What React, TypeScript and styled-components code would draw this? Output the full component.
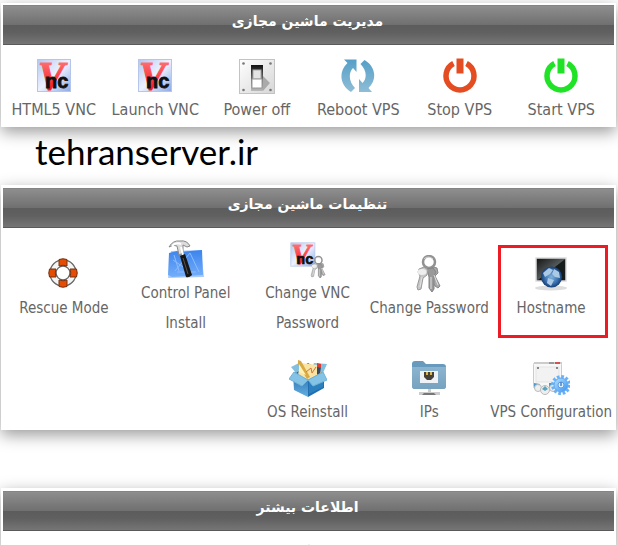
import React from "react";
import styled, { createGlobalStyle } from "styled-components";

const GlobalStyle = createGlobalStyle`
  * { box-sizing: border-box; }
  body { margin: 0; background: #fff; }
`;

const Page = styled.main`
  display: flex;
  flex-direction: column;
  height: 100vh;
  overflow: hidden;
  padding: 3px 2px 0 1px;
  font-family: "DejaVu Sans Condensed", "Noto Sans", sans-serif;
`;

const Panel = styled.section<{ $spaced?: boolean; $fill?: boolean }>`
  flex: ${(p) => (p.$fill ? "1 0 auto" : "0 0 auto")};
  padding: ${(p) => (p.$spaced ? "3px 2px" : "2px")};
  background: #fff;
  box-shadow: 0 5px 15px rgba(0, 0, 0, 0.4);
`;

const PanelTitle = styled.h2`
  display: flex;
  justify-content: center;
  margin: 0;
  height: 40px;
  padding: 5px 2px 0 0;
  border-top: 1px solid #848484;
  border-bottom: 1px solid #5a5a5a;
  background: linear-gradient(#8e8e8e, #707070 49%, #5c5c5c 50%, #606060 70%, #757575);
  color: #fff;
  font: bold 14px/20px "DejaVu Sans", sans-serif;
`;

const Actions = styled.nav<{ $columns: number; $size: number }>`
  display: grid;
  grid-template-columns: repeat(${(p) => p.$columns}, minmax(0, 1fr));
  row-gap: 21px;
  padding: 12px 2px 0 0;
  font-size: ${(p) => p.$size}px;
`;

const Action = styled.a<{ $marked?: boolean }>`
  display: flex;
  flex-direction: column;
  align-items: center;
  justify-content: center;
  color: #666;
  text-decoration: none;
  ${(p) => p.$marked && "margin: 5px 4px 0 8px; padding: 0 4px 5px 0; border: 3px solid #ed1c24;"}
`;

const Label = styled.span`
  direction: ltr;
  margin: 0 -2px;
  text-align: center;
  line-height: 30px;
`;

const Glyph = styled.svg`
  display: block;
  flex: none;
  width: 38px;
  height: 38px;
  direction: ltr;
`;

const Watermark = styled.p`
  flex: none;
  margin: 0;
  padding-left: 34px;
  height: 58px;
  color: #000;
  font: 35px/48px Lato, sans-serif;
`;

const Gap = styled.div`
  flex: none;
  height: 58px;
`;

const More = styled.div`
  display: flex;
  justify-content: center;
  padding-top: 12px;
`;

function Icon({ children }: { children: React.ReactNode }) {
  return <Glyph viewBox="0 0 38 38" aria-hidden="true">{children}</Glyph>;
}

function VncArt({ id }: { id: string }) {
  return (
    <>
      <defs>
        <linearGradient id={`${id}b`} x1="0" y1="0" x2="1" y2="1">
          <stop offset="0" stopColor="#b3c7f2" /><stop offset=".5" stopColor="#edf2ff" /><stop offset="1" stopColor="#8da9e4" />
        </linearGradient>
        <linearGradient id={`${id}r`} x1="0" y1="0" x2="0" y2="1">
          <stop offset="0" stopColor="#ff8b8b" /><stop offset=".55" stopColor="#fb3c43" /><stop offset="1" stopColor="#f00008" />
        </linearGradient>
      </defs>
      <rect x="2.5" y="2.5" width="33" height="32" fill={`url(#${id}b)`} stroke="#b6c6ea" />
      <text x="3" y="32" fill={`url(#${id}r)`} stroke={`url(#${id}r)`} strokeWidth="1.2" fontFamily="Liberation Serif" fontStyle="italic" fontWeight="700" fontSize="40">V</text>
      <text x="10" y="31" fill="#111" stroke="#111" strokeWidth=".8" fontFamily="Liberation Sans" fontWeight="700" fontSize="20">nc</text>
    </>
  );
}

function SwitchIcon() {
  return (
    <Icon>
      <defs>
        <linearGradient id="plate" x1="0" y1="0" x2="1" y2="1"><stop stopColor="#fff" /><stop offset="1" stopColor="#d6d6d6" /></linearGradient>
        <linearGradient id="slot" x1="0" y1="0" x2="0" y2="1"><stop stopColor="#111" /><stop offset="1" stopColor="#bbb" /></linearGradient>
      </defs>
      <rect x="1.5" y="2.5" width="35" height="34" fill="url(#plate)" stroke="#c3c3c3" />
      <path d="M24 18l8 8-7 8H15z" fill="#aaa" />
      <rect x="13" y="8" width="12" height="26" fill="url(#slot)" />
      <rect x="15" y="13" width="8" height="9" fill="#e4e4e4" stroke="#aaa" />
      <path d="M14 22h10v9H14z" fill="#fff" stroke="#999" />
      <g fill="#777"><circle cx="5.500" cy="6.500" r="1.300" /><circle cx="32.500" cy="6.500" r="1.300" /><circle cx="5.500" cy="33" r="1.300" /><circle cx="32.500" cy="33" r="1.300" /></g>
    </Icon>
  );
}

function RebootIcon() {
  return (
    <Icon>
      <defs><linearGradient id="reboot" x1="0" y1="0" x2="0" y2="1"><stop stopColor="#559fc8" /><stop offset="1" stopColor="#8fbdd6" /></linearGradient></defs>
      <path d="M5 2.500H17.500V15l-3.500-4c-5 5-4 14 2 20l-4 4C1 28-1 15 8.500 6z" fill="url(#reboot)" />
      <path d="M33 35H20V22l3.500 4c5-5 4-13-2-19l4-4C36 9 39 22 29.500 31z" fill="url(#reboot)" />
    </Icon>
  );
}

function PowerIcon({ color }: { color: string }) {
  return (
    <Icon>
      <path d="M12.500 6.500A14 14 0 1 0 25.500 6.500" fill="none" stroke={color} strokeWidth="5.500" />
      <path d="M15.500 1.500h7v15h-7z" fill={color} />
    </Icon>
  );
}

function RescueIcon() {
  return (
    <Icon>
      <circle cx="18" cy="18" r="10" fill="none" stroke="#666" strokeWidth="7.500" />
      <circle cx="18" cy="18" r="10" fill="none" stroke="#f5f5f5" strokeWidth="5" />
      {[0, 90, 180, 270].map((angle) => (
        <g key={angle} transform={`rotate(${angle} 18 18)`}>
          <path d="M14 4.500q4-1.500 8 0v6.500q-4-1.500-8 0z" fill="#e64d04" stroke="#743212" />
        </g>
      ))}
    </Icon>
  );
}

function ToolsIcon() {
  return (
    <Icon>
      <defs><linearGradient id="blueprint" x1="0" y1="0" x2="0" y2="1"><stop stopColor="#3b84ed" /><stop offset="1" stopColor="#75aefa" /></linearGradient></defs>
      <path d="M4 11l30-1 3 27L1 38z" fill="#a8ccff" />
      <path d="M2 13l8-2 2 1 23-2 1 25-31 2-4-2z" fill="url(#blueprint)" />
      <path d="M8 31L23 13l9 19M6 20l19 13M10 32h19M7 15l5 16" fill="none" stroke="#8bbcff" />
      <path d="M2 7Q6 0 13 1q7-1 10 5l-3 1-4-2v8l-4 2-2-9q-4-2-8 1z" fill="#ddd" stroke="#888" />
      <path d="M5 6q4-4 9-2M14 7l2 8" fill="none" stroke="#fff" strokeWidth="2" />
      <path d="M13 16l5-2 7 21q-3 3-6 2z" fill="#171717" /><path d="M16 18l5 16" stroke="#555" />
    </Icon>
  );
}

function KeysArt() {
  return (
    <>
      <circle cx="19" cy="7" r="6" fill="none" stroke="#929292" strokeWidth="2.500" />
      <path d="M14 4q4-4 9 0" fill="none" stroke="#d3d3d3" />
      <path d="M23 12l4 1 1 5-3 3 5 10-2 2-3-2-6-11 1-5z" fill="#aaa" stroke="#888" />
      <path d="M17 14l6-1 3 4-2 4v13l-2 3-3-4V22z" fill="#999" stroke="#858585" />
      <path d="M9 14l5-2 4 3-1 5-4 3-2 11-3 1-1-3 3-11-2-4z" fill="#c7c7c7" stroke="#999" />
      <ellipse cx="12" cy="17" rx="4.500" ry="3" fill="#eee" /><path d="M21 22v12M24 20l4 10M12 22l-2 10" stroke="#e1e1e1" />
    </>
  );
}

function HostIcon() {
  return (
    <Icon>
      <defs>
        <linearGradient id="screen" x1="0" y1="0" x2="1" y2="1"><stop stopColor="#111" /><stop offset=".5" stopColor="#53595a" /><stop offset=".52" stopColor="#161b1c" /></linearGradient>
        <radialGradient id="globe"><stop stopColor="#83b3dc" /><stop offset=".6" stopColor="#3f75b4" /><stop offset="1" stopColor="#173e75" /></radialGradient>
      </defs>
      <ellipse cx="19" cy="33" rx="16" ry="2.500" fill="#ddd" />
      <rect x="4" y="3" width="30" height="23" fill="url(#screen)" stroke="#ddd" strokeWidth="1.500" />
      <circle cx="19.500" cy="22" r="10.500" fill="url(#globe)" />
      <path d="M11 18l6-5 4 2-3 4-5 3zM22 14l5 3 1 6-5-1-3-3zM16 23l6 2-3 6-4-3z" fill="#a9c9e5" />
    </Icon>
  );
}

function BoxIcon() {
  return (
    <Icon>
      <defs><linearGradient id="boxSide" x1="0" y1="0" x2="0" y2="1"><stop stopColor="#286eaa" /><stop offset="1" stopColor="#63b0e3" /></linearGradient></defs>
      <path d="M5 14l14-10 15 9-14 9z" fill="#276397" />
      <path d="M2 8l8-4 9 2-12 8zM25 4l13 1-4 9-11-5z" fill="#83bfdf" />
      <path d="M11 4l18 2 3 8-13 7-10-5z" fill="#fae4a3" /><path d="M9 1l3 1 9 16-3 2L9 5z" fill="#d8aa43" />
      <path d="M10 5l7 11-7-3z" fill="#fff1b6" /><path d="M17 13l5-4 1 5 4-6" fill="none" stroke="#d8733f" /><path d="M28 6l4 2-1 7-3 1z" fill="#384a66" /><path d="M28 4l4 1v4l-4-1z" fill="#dc3c34" />
      <path d="M4 15l15 6v17L5 31z" fill="url(#boxSide)" /><path d="M19 21l16-7v15l-16 9z" fill="#216eb1" /><path d="M20 24l14-6v10l-14 7z" fill="#2c80bd" />
      <path d="M5 13l14 8-6 6-13-7zM19 21l15-8 4 8-14 6z" fill="#84c3e6" stroke="#73b1d5" />
    </Icon>
  );
}

function FolderIcon() {
  return (
    <Icon>
      <defs><linearGradient id="folder" x1="0" y1="0" x2="0" y2="1"><stop stopColor="#8bb4cf" /><stop offset="1" stopColor="#76a2bf" /></linearGradient></defs>
      <path d="M2 5q0-3 3-3h8l3 3h17q3 0 3 3v19q0 3-3 3H5q-3 0-3-3z" fill="#679abd" />
      <path d="M2 8h34v19q0 3-3 3H5q-3 0-3-3z" fill="url(#folder)" />
      <rect x="10" y="12" width="18" height="12" fill="#edf2f6" /><path d="M14 13h10v5l-3 3h-4l-3-3z" fill="#45413a" /><path d="M16 13v3h2v-3m2 0v3h2v-3" fill="#d5b553" />
      <path d="M18 30h3v4h-3zM9 33h21v3H9z" fill="#ccc" /><path d="M14 34h10l2 2H12z" fill="#777" />
    </Icon>
  );
}

function ConfigIcon() {
  return (
    <Icon>
      <defs><linearGradient id="gear" x1="0" y1="0" x2="1" y2="1"><stop stopColor="#b9e4ff" /><stop offset="1" stopColor="#3590f2" /></linearGradient></defs>
      <rect x="1.500" y="3.500" width="28" height="26" rx="2" fill="#f8f8f8" stroke="#ccc" /><path d="M2 4h28" stroke="#ccc" strokeWidth="2" /><path d="M17 4h5" stroke="#999" strokeWidth="2" /><path d="M23 4h5" stroke="#d55050" strokeWidth="2" />
      <rect x="4" y="8" width="23" height="15" fill="#f2f2f2" stroke="#e3e3e3" /><path d="M5 9h2m17 0h2" stroke="#888" strokeWidth="2" />
      <path d="M2 24l6 1-2 5-4-1zm15 0h6l-2 5h-4z" fill="#479bd1" />
      <g fill="#eee" stroke="#bbb"><circle cx="6" cy="29" r="3.500" /><circle cx="13" cy="31" r="4.500" /><circle cx="21" cy="29" r="3.500" /></g><path d="M10 30l3-3 3 3-3 2z" fill="#5aa5bd" />
      <circle cx="29" cy="26" r="8.500" fill="none" stroke="#68b0f8" strokeWidth="3" strokeDasharray="2.700 1.750" /><circle cx="29" cy="26" r="7" fill="url(#gear)" stroke="#5ba6f1" /><circle cx="29" cy="26" r="3" fill="#d5efff" stroke="#619ade" /><path d="M29 23v4" stroke="#4680c9" strokeWidth="1.500" />
    </Icon>
  );
}

type Item = { label: string; icon: React.ReactNode; marked?: boolean };

const machine: Item[] = [
  { label: "Start VPS", icon: <PowerIcon color="#20e327" /> },
  { label: "Stop VPS", icon: <PowerIcon color="#e44c22" /> },
  { label: "Reboot VPS", icon: <RebootIcon /> },
  { label: "Power off", icon: <SwitchIcon /> },
  { label: "Launch VNC", icon: <Icon><VncArt id="launch" /></Icon> },
  { label: "HTML5 VNC", icon: <Icon><VncArt id="html" /></Icon> },
];

const settings: Item[] = [
  { label: "Hostname", icon: <HostIcon />, marked: true },
  { label: "Change Password", icon: <Icon><KeysArt /></Icon> },
  { label: "Change VNC Password", icon: <Icon><g transform="translate(0 1) scale(.73)"><VncArt id="change" /></g><g transform="translate(18 16) scale(.6)"><KeysArt /></g></Icon> },
  { label: "Control Panel Install", icon: <ToolsIcon /> },
  { label: "Rescue Mode", icon: <RescueIcon /> },
  { label: "VPS Configuration", icon: <ConfigIcon /> },
  { label: "IPs", icon: <FolderIcon /> },
  { label: "OS Reinstall", icon: <BoxIcon /> },
];

function ActionGrid({ items, columns, size }: { items: Item[]; columns: number; size: number }) {
  return (
    <Actions $columns={columns} $size={size}>
      {items.map((item) => (
        <Action key={item.label} href="#" $marked={item.marked}>
          {item.icon}
          <Label>{item.label}</Label>
        </Action>
      ))}
    </Actions>
  );
}

export default function App() {
  return (
    <>
      <GlobalStyle />
      <Page>
        <Panel dir="rtl">
          <PanelTitle>مدیریت ماشین مجازی</PanelTitle>
          <ActionGrid items={machine} columns={6} size={16} />
        </Panel>
        <Watermark>tehranserver.ir</Watermark>
        <Panel dir="rtl" $spaced>
          <PanelTitle>تنظیمات ماشین مجازی</PanelTitle>
          <ActionGrid items={settings} columns={5} size={15} />
        </Panel>
        <Gap />
        <Panel dir="rtl" $spaced $fill>
          <PanelTitle>اطلاعات بیشتر</PanelTitle>
          <More>
            <svg width="4" height="3" viewBox="0 0 4 3" aria-hidden="true"><path d="M0 3q2-3 4 0" fill="#ccc" /></svg>
          </More>
        </Panel>
      </Page>
    </>
  );
}
